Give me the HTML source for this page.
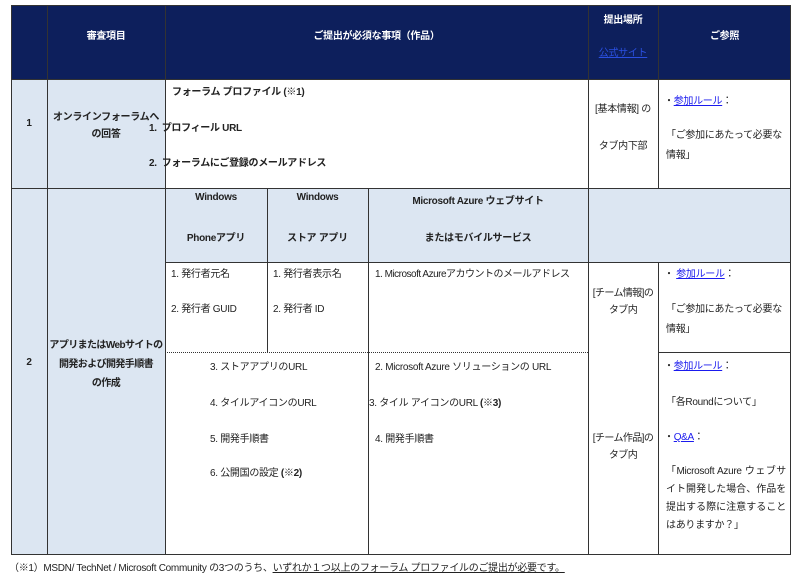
<!DOCTYPE html>
<html><head><meta charset="utf-8"><style>
*{margin:0;padding:0;box-sizing:border-box}
body{width:800px;height:581px;background:#fff;position:relative;overflow:hidden;font-family:"Liberation Sans","Noto Sans CJK JP",sans-serif;font-size:10px;letter-spacing:-0.3px;color:#222}
.a{position:absolute;white-space:nowrap}
.r{position:absolute;background:#333}
.b{font-weight:bold}
.w{color:#fff;font-weight:bold}
.c{text-align:center}
a{color:#1a1aee;text-decoration:underline}
</style></head><body>
<div class="a" style="left:11px;top:5px;width:780px;height:74px;background:#0d1f5c"></div>
<div class="a" style="left:11px;top:79px;width:154px;height:475px;background:#dce6f2"></div>
<div class="a" style="left:165px;top:188px;width:626px;height:74px;background:#dce6f2"></div>
<div class="r" style="left:11px;top:5px;width:780px;height:1px"></div>
<div class="r" style="left:11px;top:79px;width:780px;height:1px"></div>
<div class="r" style="left:11px;top:188px;width:780px;height:1px"></div>
<div class="r" style="left:165px;top:262px;width:626px;height:1px"></div>
<div class="a" style="left:165px;top:352px;width:423px;height:0;border-top:1px dotted #333"></div>
<div class="r" style="left:658px;top:352px;width:133px;height:1px"></div>
<div class="r" style="left:11px;top:554px;width:780px;height:1px"></div>
<div class="r" style="left:11px;top:5px;width:1px;height:550px"></div>
<div class="r" style="left:47px;top:5px;width:1px;height:550px"></div>
<div class="r" style="left:165px;top:5px;width:1px;height:550px"></div>
<div class="r" style="left:267px;top:188px;width:1px;height:164px"></div>
<div class="r" style="left:368px;top:188px;width:1px;height:367px"></div>
<div class="r" style="left:588px;top:5px;width:1px;height:550px"></div>
<div class="r" style="left:658px;top:5px;width:1px;height:183px"></div>
<div class="r" style="left:658px;top:262px;width:1px;height:293px"></div>
<div class="r" style="left:790px;top:5px;width:1px;height:550px"></div>
<div class="a w c" style="left:47px;top:27px;width:118px">審査項目</div>
<div class="a w c" style="left:165px;top:27px;width:423px">ご提出が必須な事項（作品）</div>
<div class="a w c" style="left:588px;top:11px;width:70px">提出場所</div>
<div class="a c" style="left:588px;top:44px;width:70px"><a style="color:#2a4fe0">公式サイト</a></div>
<div class="a w c" style="left:658px;top:27px;width:133px">ご参照</div>
<div class="a b c" style="left:11px;top:118px;width:36px">1</div>
<div class="a b c" style="left:47px;top:109px;width:118px;line-height:17px">オンラインフォーラムへ<br>の回答</div>
<div class="a b" style="left:172px;top:83px">フォーラム プロファイル (※1)</div>
<div class="a b" style="left:149px;top:119px">1.&nbsp; プロフィール URL</div>
<div class="a b" style="left:149px;top:154px">2.&nbsp; フォーラムにご登録のメールアドレス</div>
<div class="a c" style="left:588px;top:100px;width:70px">[基本情報] の</div>
<div class="a c" style="left:588px;top:137px;width:70px">タブ内下部</div>
<div class="a" style="left:664px;top:92px">・<a>参加ルール</a>：</div>
<div class="a" style="left:666px;top:126px;line-height:20px">「ご参加にあたって必要な<br>情報」</div>
<div class="a b c" style="left:165px;top:192px;width:102px">Windows</div>
<div class="a b c" style="left:165px;top:229px;width:102px">Phoneアプリ</div>
<div class="a b c" style="left:267px;top:192px;width:101px">Windows</div>
<div class="a b c" style="left:267px;top:229px;width:101px">ストア アプリ</div>
<div class="a b c" style="left:368px;top:192px;width:220px">Microsoft Azure ウェブサイト</div>
<div class="a b c" style="left:368px;top:229px;width:220px">またはモバイルサービス</div>
<div class="a b c" style="left:11px;top:357px;width:36px">2</div>
<div class="a b c" style="left:47px;top:336px;width:118px;line-height:19px;letter-spacing:-0.6px">アプリまたはWebサイトの<br>開発および開発手順書<br>の作成</div>
<div class="a" style="left:171px;top:265px">1. 発行者元名</div>
<div class="a" style="left:171px;top:300px">2. 発行者 GUID</div>
<div class="a" style="left:273px;top:265px">1. 発行者表示名</div>
<div class="a" style="left:273px;top:300px">2. 発行者 ID</div>
<div class="a" style="left:375px;top:265px;letter-spacing:-0.5px">1. Microsoft Azureアカウントのメールアドレス</div>
<div class="a c" style="left:588px;top:285px;width:70px;line-height:17px;letter-spacing:-0.6px">[チーム情報]の<br>タブ内</div>
<div class="a" style="left:664px;top:265px">・ <a>参加ルール</a>：</div>
<div class="a" style="left:666px;top:300px;line-height:20px">「ご参加にあたって必要な<br>情報」</div>
<div class="a" style="left:210px;top:358px">3. ストアアプリのURL</div>
<div class="a" style="left:210px;top:394px">4. タイルアイコンのURL</div>
<div class="a" style="left:210px;top:430px">5. 開発手順書</div>
<div class="a" style="left:210px;top:464px">6. 公開国の設定 <b>(※2)</b></div>
<div class="a" style="left:375px;top:358px">2. Microsoft Azure ソリューションの URL</div>
<div class="a" style="left:369px;top:394px">3. タイル アイコンのURL <b>(※3)</b></div>
<div class="a" style="left:375px;top:430px">4. 開発手順書</div>
<div class="a c" style="left:588px;top:430px;width:70px;line-height:17px;letter-spacing:-0.6px">[チーム作品]の<br>タブ内</div>
<div class="a" style="left:664px;top:357px">・<a>参加ルール</a>：</div>
<div class="a" style="left:666px;top:393px">「各Roundについて」</div>
<div class="a" style="left:664px;top:428px">・<a>Q&amp;A</a>：</div>
<div class="a" style="left:666px;top:463px;width:120px;line-height:18px;white-space:normal;text-align:justify">「Microsoft Azure ウェブサイト開発した場合、作品を提出する際に注意することはありますか？」</div>
<div class="a" style="left:9px;top:559px;font-size:10px">（※1）MSDN/ TechNet / Microsoft Community の3つのうち、<u>いずれか１つ以上のフォーラム プロファイルのご提出が必要です。</u></div>
</body></html>
